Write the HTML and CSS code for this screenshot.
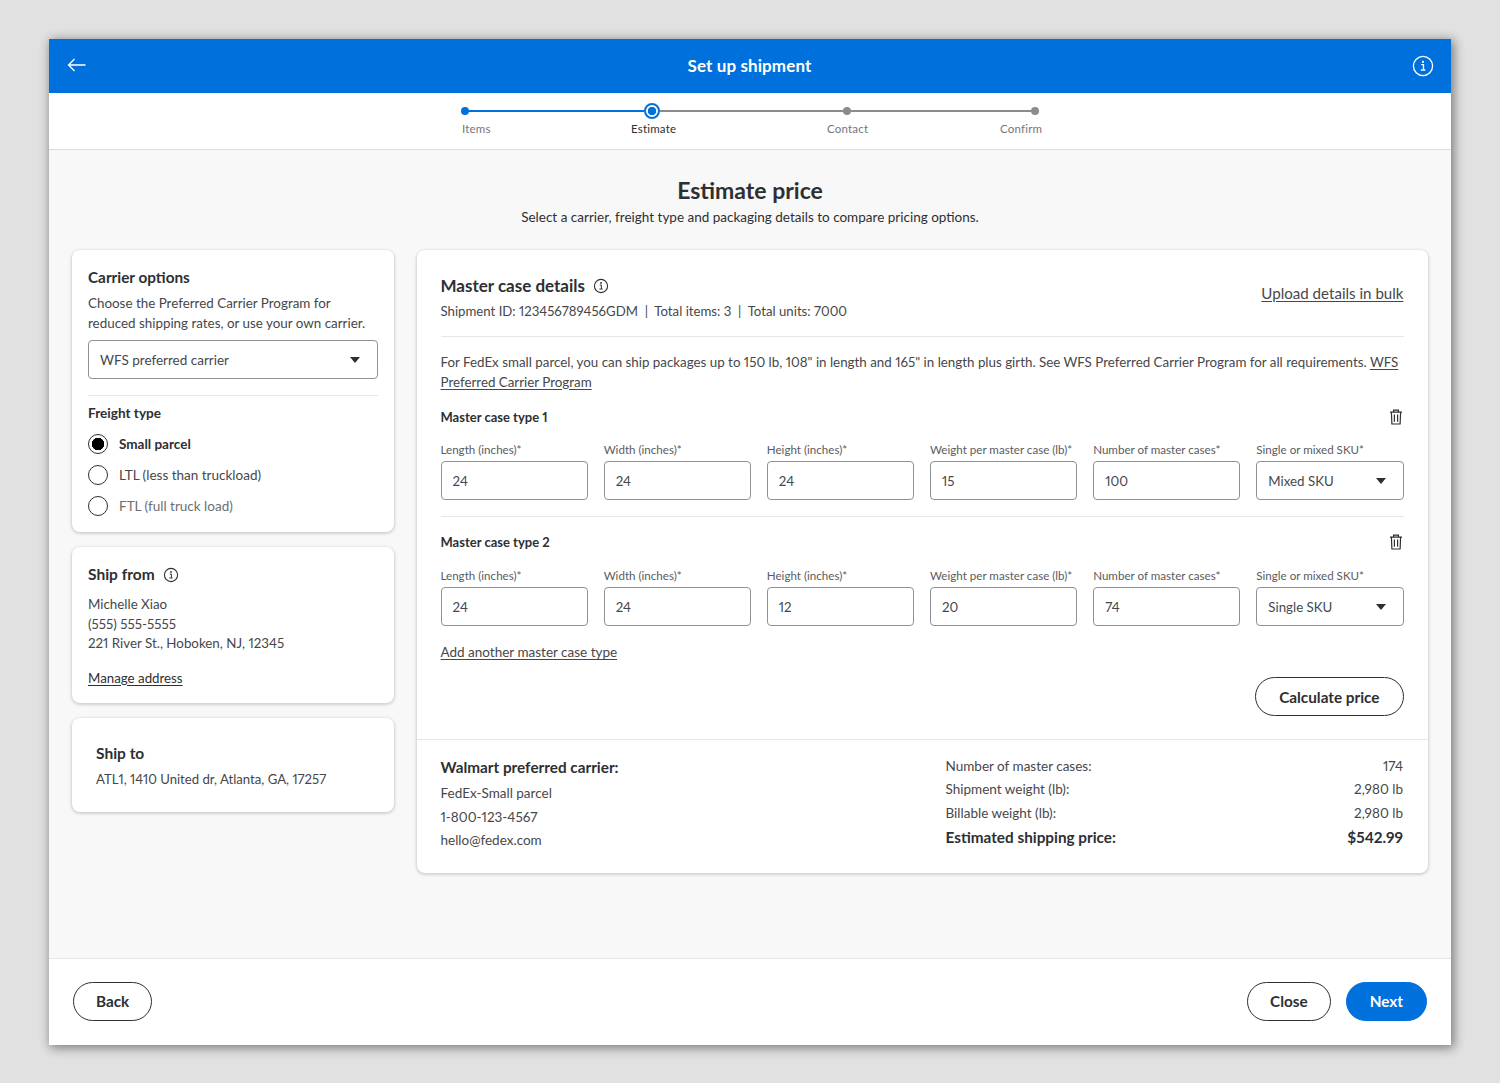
FILE: index.html
```html
<!DOCTYPE html>
<html lang="en">
<head>
<meta charset="utf-8">
<title>Set up shipment</title>
<link rel="stylesheet" href="styles.css">
</head>
<body>
<div class="window">
  <header class="topbar">
    <svg class="back-icon" width="20" height="14" viewBox="0 0 20 14"><path d="M18.5 7H1.5M7.5 1L1.5 7l6 6" fill="none" stroke="#fff" stroke-width="1.3"/></svg>
    <h1 class="topbar-title">Set up shipment</h1>
    <svg class="topbar-info" width="22" height="22" viewBox="0 0 22 22"><circle cx="11" cy="11" r="9.6" fill="none" stroke="#fff" stroke-width="1.3"/><circle cx="11" cy="6.9" r="1.1" fill="#fff"/><path d="M9.2 9.6h2.3v5.2M8.9 15h4.4" fill="none" stroke="#fff" stroke-width="1.3"/></svg>
  </header>
  <nav class="stepper">
    <div class="track">
      <span class="dot dot-blue"></span><span class="line line-blue line-a"></span><span class="dot-current"></span><span class="line line-b"></span><span class="dot dot-grey"></span><span class="line line-c"></span><span class="dot dot-grey"></span>
    </div>
    <div class="step-labels">
      <span class="step-label label-items">Items</span>
      <span class="step-label step-active label-estimate">Estimate</span>
      <span class="step-label label-contact">Contact</span>
      <span class="step-label label-confirm">Confirm</span>
    </div>
  </nav>
  <main class="content">
    <div class="page-head">
      <h2 class="page-title">Estimate price</h2>
      <p class="page-sub">Select a carrier, freight type and packaging details to compare pricing options.</p>
    </div>
    <div class="columns">
      <aside class="left-col">
        <section class="card card-carrier">
          <h3 class="card-title">Carrier options</h3>
          <p class="carrier-text">Choose the Preferred Carrier Program for reduced shipping rates, or use your own carrier.</p>
          <div class="box select-box"><span>WFS preferred carrier</span><i class="caret"></i></div>
          <hr class="rule rule-left">
          <h4 class="freight-title">Freight type</h4>
          <div class="radio-row"><span class="radio radio-on"></span><span class="radio-text radio-strong">Small parcel</span></div>
          <div class="radio-row"><span class="radio"></span><span class="radio-text">LTL (less than truckload)</span></div>
          <div class="radio-row"><span class="radio"></span><span class="radio-text radio-muted">FTL (full truck load)</span></div>
        </section>
        <section class="card card-from">
          <h3 class="card-title-lg">Ship from
            <svg class="info-icon" width="16" height="16" viewBox="0 0 16 16"><circle cx="8" cy="8" r="6.6" fill="none" stroke="#2e2f32" stroke-width="1.1"/><circle cx="8" cy="5" r=".9" fill="#2e2f32"/><path d="M6.8 7.1h1.6v3.8M6.4 11h3.2" fill="none" stroke="#2e2f32" stroke-width="1"/></svg>
          </h3>
          <p class="address">Michelle Xiao<br>(555) 555-5555<br>221 River St., Hoboken, NJ, 12345</p>
          <a class="link manage-link" href="#">Manage address</a>
        </section>
        <section class="card card-to">
          <h3 class="card-title-lg">Ship to</h3>
          <p class="to-text">ATL1, 1410 United dr, Atlanta, GA, 17257</p>
        </section>
      </aside>
      <section class="card card-main">
        <div class="main-top">
          <div class="details-head">
            <div>
              <h3 class="details-title">Master case details
                <svg class="info-icon" width="16" height="16" viewBox="0 0 16 16"><circle cx="8" cy="8" r="6.6" fill="none" stroke="#2e2f32" stroke-width="1.1"/><circle cx="8" cy="5" r=".9" fill="#2e2f32"/><path d="M6.8 7.1h1.6v3.8M6.4 11h3.2" fill="none" stroke="#2e2f32" stroke-width="1"/></svg>
              </h3>
              <p class="details-meta">Shipment ID: 123456789456GDM&nbsp; | &nbsp;Total items: 3&nbsp; | &nbsp;Total units: 7000</p>
            </div>
            <a class="link upload-link" href="#">Upload details in bulk</a>
          </div>
          <hr class="rule rule-details">
          <p class="notice">For FedEx small parcel, you can ship packages up to 150 lb, 108" in length and 165" in length plus girth. See WFS Preferred Carrier Program for all requirements. <a class="link" href="#">WFS</a> <a class="link" href="#">Preferred Carrier Program</a></p>

          <div class="case">
            <div class="case-head"><h4 class="case-title">Master case type 1</h4>
              <svg width="14" height="16" viewBox="0 0 14 16"><path d="M1 3.2h12M4.6 3V1.2h4.8V3M2.4 3.2l.5 11.8h8.2l.5-11.8M5.4 5.6v7.2M8.6 5.6v7.2" fill="none" stroke="#2e2f32" stroke-width="1.2"/></svg>
            </div>
            <div class="fields">
              <label class="field"><span class="field-label">Length (inches)*</span><span class="box"><span>24</span></span></label>
              <label class="field"><span class="field-label">Width (inches)*</span><span class="box"><span>24</span></span></label>
              <label class="field"><span class="field-label">Height (inches)*</span><span class="box"><span>24</span></span></label>
              <label class="field"><span class="field-label">Weight per master case (lb)*</span><span class="box"><span>15</span></span></label>
              <label class="field"><span class="field-label">Number of master cases*</span><span class="box"><span>100</span></span></label>
              <label class="field"><span class="field-label">Single or mixed SKU*</span><span class="box"><span>Mixed SKU</span><i class="caret"></i></span></label>
            </div>
          </div>
          <hr class="rule rule-case">
          <div class="case">
            <div class="case-head"><h4 class="case-title">Master case type 2</h4>
              <svg width="14" height="16" viewBox="0 0 14 16"><path d="M1 3.2h12M4.6 3V1.2h4.8V3M2.4 3.2l.5 11.8h8.2l.5-11.8M5.4 5.6v7.2M8.6 5.6v7.2" fill="none" stroke="#2e2f32" stroke-width="1.2"/></svg>
            </div>
            <div class="fields">
              <label class="field"><span class="field-label">Length (inches)*</span><span class="box"><span>24</span></span></label>
              <label class="field"><span class="field-label">Width (inches)*</span><span class="box"><span>24</span></span></label>
              <label class="field"><span class="field-label">Height (inches)*</span><span class="box"><span>12</span></span></label>
              <label class="field"><span class="field-label">Weight per master case (lb)*</span><span class="box"><span>20</span></span></label>
              <label class="field"><span class="field-label">Number of master cases*</span><span class="box"><span>74</span></span></label>
              <label class="field"><span class="field-label">Single or mixed SKU*</span><span class="box"><span>Single SKU</span><i class="caret"></i></span></label>
            </div>
          </div>
          <a class="link add-link" href="#">Add another master case type</a>
          <div class="calc-row"><button class="btn btn-calc" type="button">Calculate price</button></div>
        </div>
        <div class="summary">
          <div class="summary-left">
            <h4 class="summary-title">Walmart preferred carrier:</h4>
            <p class="summary-line">FedEx-Small parcel</p>
            <p class="summary-line">1-800-123-4567</p>
            <p class="summary-line">hello@fedex.com</p>
          </div>
          <dl class="summary-right">
            <div class="sum-row"><dt>Number of master cases:</dt><dd>174</dd></div>
            <div class="sum-row"><dt>Shipment weight (lb):</dt><dd>2,980 lb</dd></div>
            <div class="sum-row"><dt>Billable weight (lb):</dt><dd>2,980 lb</dd></div>
            <div class="sum-row sum-total"><dt>Estimated shipping price:</dt><dd>$542.99</dd></div>
          </dl>
        </div>
      </section>
    </div>
  </main>
  <footer class="footer">
    <button class="btn" type="button">Back</button>
    <div class="footer-right">
      <button class="btn" type="button">Close</button>
      <button class="btn btn-primary" type="button">Next</button>
    </div>
  </footer>
</div>
</body>
</html>
```
FILE: styles.css
```css
* { box-sizing: border-box; }
html, body { margin: 0; padding: 0; }
body {
  background: #e1e1e1;
  font-family: Lato, "Noto Sans", sans-serif;
  font-variant-numeric: proportional-nums;
  color: #2e2f32;
  font-size: 13.5px;
  padding: 39px 49px 38px;
}
h1, h2, h3, h4, p, dl, dd { margin: 0; }
.window {
  width: 1402px;
  height: 1006px;
  display: flex;
  flex-direction: column;
  background: #f8f8f8;
  box-shadow: 2px 2px 10px 1px rgba(0, 0, 0, .45);
}
.topbar {
  height: 54px;
  background: #0071dc;
  display: flex;
  align-items: center;
  justify-content: space-between;
  padding: 0 17px 0 18px;
  flex: none;
}
.back-icon { margin-bottom: 2px; }
.topbar-title { font-size: 17px; font-weight: 700; color: #fff; line-height: 54px; letter-spacing: .1px; }
.stepper {
  height: 57px;
  flex: none;
  background: #fff;
  border-bottom: 1px solid #dcdcdc;
  padding: 14px 0 0 412px;
}
.track { display: flex; align-items: center; height: 8px; }
.dot { width: 8px; height: 8px; border-radius: 50%; flex: none; }
.dot-blue { background: #0071dc; }
.dot-grey { background: #8a8b8e; }
.dot-current {
  width: 16px; height: 16px; border-radius: 50%; flex: none;
  border: 2px solid #0071dc;
  background: radial-gradient(circle, #0071dc 0 4px, #fff 4.5px);
}
.line { height: 2px; background: #8a8b8e; flex: none; }
.line-blue { background: #0071dc; }
.line-a { width: 175px; }
.line-b { width: 183px; }
.line-c { width: 180px; }
.step-labels { display: flex; margin-top: 6px; height: 16px; }
.step-label { font-size: 11.5px; line-height: 16px; color: #74767c; letter-spacing: .2px; }
.step-active { color: #2e2f32; }
.label-items { width: 170px; padding-left: 1px; }
.label-estimate { width: 196px; }
.label-contact { width: 173px; }
.content { flex: 1; padding: 0 23px; }
.page-head { text-align: center; padding-top: 25px; }
.page-title { font-size: 23px; line-height: 30px; font-weight: 700; }
.page-sub { line-height: 20px; margin-top: 2px; color: #2e2f32; }
.columns { display: flex; gap: 23px; margin-top: 23px; align-items: flex-start; }
.left-col { width: 322px; flex: none; display: flex; flex-direction: column; gap: 15px; }
.card {
  background: #fff;
  border-radius: 8px;
  box-shadow: 0 1px 3px 1px rgba(0, 0, 0, .16);
}
.card-carrier { height: 282px; padding: 17px 16px 0; }
.card-title { font-size: 15.3px; line-height: 20px; font-weight: 700; }
.carrier-text { line-height: 20px; margin-top: 6px; color: #46474a; font-size: 13.4px; }
.box {
  display: flex;
  align-items: center;
  justify-content: space-between;
  height: 39px;
  border: 1px solid #909196;
  border-radius: 4px;
  padding: 0 17px 0 11px;
  background: #fff;
  font-size: 13.3px;
  color: #46474a;
}
.select-box { margin-top: 7px; font-size: 13.5px; }
.caret {
  width: 0; height: 0;
  border-left: 5.5px solid transparent;
  border-right: 5.5px solid transparent;
  border-top: 6px solid #2e2f32;
  flex: none;
}
.rule { border: 0; height: 1px; background: #e6e6e6; margin: 0; }
.rule-left { margin-top: 16px; }
.freight-title { font-size: 13.6px; line-height: 18px; font-weight: 700; margin-top: 8px; }
.radio-row { display: flex; align-items: center; gap: 11px; height: 20px; margin-top: 11px; }
.freight-title + .radio-row { margin-top: 12px; }
.radio { width: 20px; height: 20px; border-radius: 50%; border: 1.5px solid #2e2f32; flex: none; background: #fff; }
.radio-on { background: radial-gradient(circle, #000 0 6px, #fff 6.5px); }
.radio-text { color: #46474a; }
.radio-strong { font-weight: 700; color: #2e2f32; }
.radio-muted { color: #6d6e71; }
.card-from { height: 156px; padding: 17px 16px 0; }
.card-title-lg { font-size: 15.5px; line-height: 21px; font-weight: 700; display: flex; align-items: center; gap: 8px; }
.address { line-height: 19.5px; margin-top: 10px; color: #46474a; font-size: 13.35px; }
.link { color: inherit; text-decoration: underline; text-underline-offset: 2px; }
.manage-link { display: block; margin-top: 14px; line-height: 20px; color: #2e2f32; font-size: 13.3px; }
.card-to { height: 94px; padding: 25px 24px 0; }
.to-text { line-height: 20px; margin-top: 5px; color: #46474a; font-size: 13.15px; }
.card-main { flex: 1; height: 623px; display: flex; flex-direction: column; }
.main-top { padding: 25px 24.5px 0 23.5px; height: 490px; border-bottom: 1px solid #e6e6e6; }
.details-head { display: flex; justify-content: space-between; align-items: flex-start; }
.details-title { font-size: 17px; line-height: 22px; font-weight: 700; display: flex; align-items: center; gap: 8px; }
.details-meta { line-height: 20px; margin-top: 4px; color: #46474a; font-size: 13.2px; }
.upload-link { font-size: 15.1px; color: #46474a; margin-top: 9px; }
.rule-details { margin-top: 15px; }
.notice { line-height: 19.5px; margin-top: 16px; color: #46474a; font-size: 13.35px; }
.case-head { display: flex; justify-content: space-between; align-items: center; height: 20px; padding-right: 1px; }
.notice + .case { margin-top: 15px; }
.case-title { font-size: 13px; font-weight: 700; }
.fields { display: grid; grid-template-columns: repeat(6, 1fr); gap: 16px; margin-top: 15px; }
.rule-case + .case .fields { margin-top: 16px; }
.field { display: flex; flex-direction: column; gap: 3px; }
.field-label { font-size: 11.6px; line-height: 16px; color: #5a5b5f; white-space: nowrap; }
.rule-case { margin: 16px 0 15px; }
.add-link { display: block; margin-top: 16px; line-height: 20px; color: #46474a; }
.calc-row { display: flex; justify-content: flex-end; margin-top: 15px; }
.btn {
  height: 39px;
  padding: 0 22px;
  border: 1px solid #2e2f32;
  border-radius: 20px;
  background: #fff;
  color: #2e2f32;
  font-family: inherit;
  font-size: 15.3px;
  font-weight: 700;
}
.btn-calc { padding: 0 23px; }
.btn-primary { background: #0071dc; border-color: #0071dc; color: #fff; padding: 0 23px; }
.summary { flex: 1; display: flex; padding: 15px 25px 0 23.5px; }
.summary-left { width: 505px; padding-top: 2px; }
.summary-title { font-size: 15.3px; font-weight: 700; line-height: 20px; margin-bottom: 5px; }
.summary-line { line-height: 23.5px; color: #46474a; }
.summary-right { flex: 1; }
.sum-row { display: flex; justify-content: space-between; line-height: 23.4px; color: #46474a; }
.sum-total { font-size: 15.3px; font-weight: 700; color: #2e2f32; margin-top: 1px; }
.footer {
  height: 87px;
  flex: none;
  background: #fff;
  border-top: 1px solid #e6e6e6;
  display: flex;
  align-items: center;
  justify-content: space-between;
  padding: 0 24px 2px 24px;
}
.footer-right { display: flex; gap: 15px; }
```
